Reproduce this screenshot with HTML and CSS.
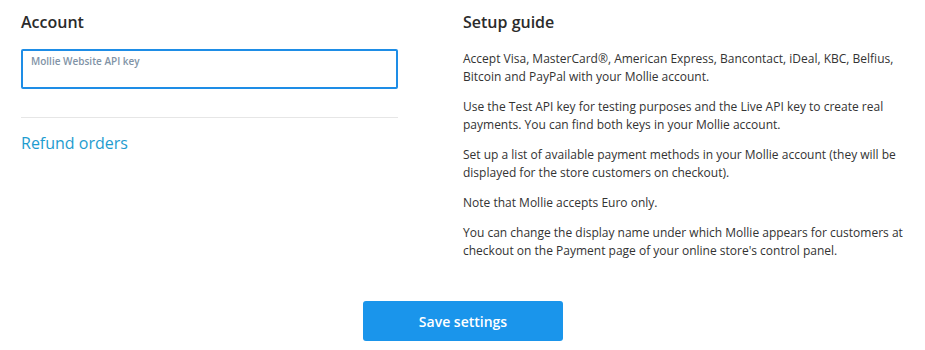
FILE: index.html
```html
<!DOCTYPE html>
<html lang="en">
<head>
    <meta charset="UTF-8">
    <meta name="viewport" content="width=device-width, initial-scale=1.0">
    <title>Mollie Settings</title>
    <link rel="stylesheet" href="styles.css">
</head>
<body>

<div class="settings">
    <div class="columns">
        <div class="account">
            <h2>Account</h2>

            <div class="field">
                <label for="apiKey">Mollie Website API key</label>
                <input type="text" id="apiKey" name="apiKey">
            </div>

            <hr class="divider">

            <a href="#" class="refund-link">Refund orders</a>
        </div>

        <div class="guide">
            <h2>Setup guide</h2>
            <p>Accept Visa, MasterCard®, American Express, Bancontact, iDeal, KBC, Belfius, Bitcoin and PayPal with your Mollie account.</p>
            <p>Use the Test API key for testing purposes and the Live API key to create real payments. You can find both keys in your Mollie account.</p>
            <p>Set up a list of available payment methods in your Mollie account (they will be displayed for the store customers on checkout).</p>
            <p>Note that Mollie accepts Euro only.</p>
            <p>You can change the display name under which Mollie appears for customers at checkout on the Payment page of your online store's control panel.</p>
        </div>
    </div>

    <div class="actions">
        <button type="submit" class="save-button">Save settings</button>
    </div>
</div>

</body>
</html>
```

FILE: styles.css
```css
body {
    font-family: "Open Sans", Arial, sans-serif;
    margin: 0;
    background-color: #fff;
    color: #333;
}

.settings {
    padding: 11px 20px 0 21px;
}

.columns {
    display: flex;
    gap: 65px;
}

.account {
    width: 377px;
    flex-shrink: 0;
}

.guide {
    flex: 1;
}

h2 {
    font-size: 16px;
    font-weight: 600;
    color: #2b2b2b;
    margin: 0;
    line-height: 22px;
}

.field {
    margin-top: 16px;
    height: 40px;
    box-sizing: border-box;
    border: 2px solid #1e8de6;
    border-radius: 2px;
    padding: 3px 8px 0;
    display: flex;
    flex-direction: column;
}

.field label {
    font-size: 10px;
    font-weight: 600;
    color: #8193a6;
    line-height: 14px;
}

.field input {
    border: none;
    outline: none;
    padding: 0;
    font-family: inherit;
    font-size: 13px;
    background: transparent;
}

.divider {
    border: none;
    border-top: 1px solid #e6e6e6;
    margin: 28px 0 14px;
}

.refund-link {
    font-size: 16px;
    color: #1e9ccf;
    text-decoration: none;
    line-height: 22px;
}

.guide h2 {
    margin-bottom: 17px;
}

.guide p {
    font-size: 12px;
    line-height: 18px;
    margin: 0 0 12px;
}

.guide p:last-child {
    margin-bottom: 0;
}

.actions {
    display: flex;
    justify-content: center;
    margin-top: 41px;
}

.save-button {
    width: 200px;
    height: 40px;
    background-color: #1a95eb;
    color: #fff;
    border: none;
    border-radius: 3px;
    font-family: inherit;
    font-size: 14px;
    font-weight: 600;
    cursor: pointer;
}
```
